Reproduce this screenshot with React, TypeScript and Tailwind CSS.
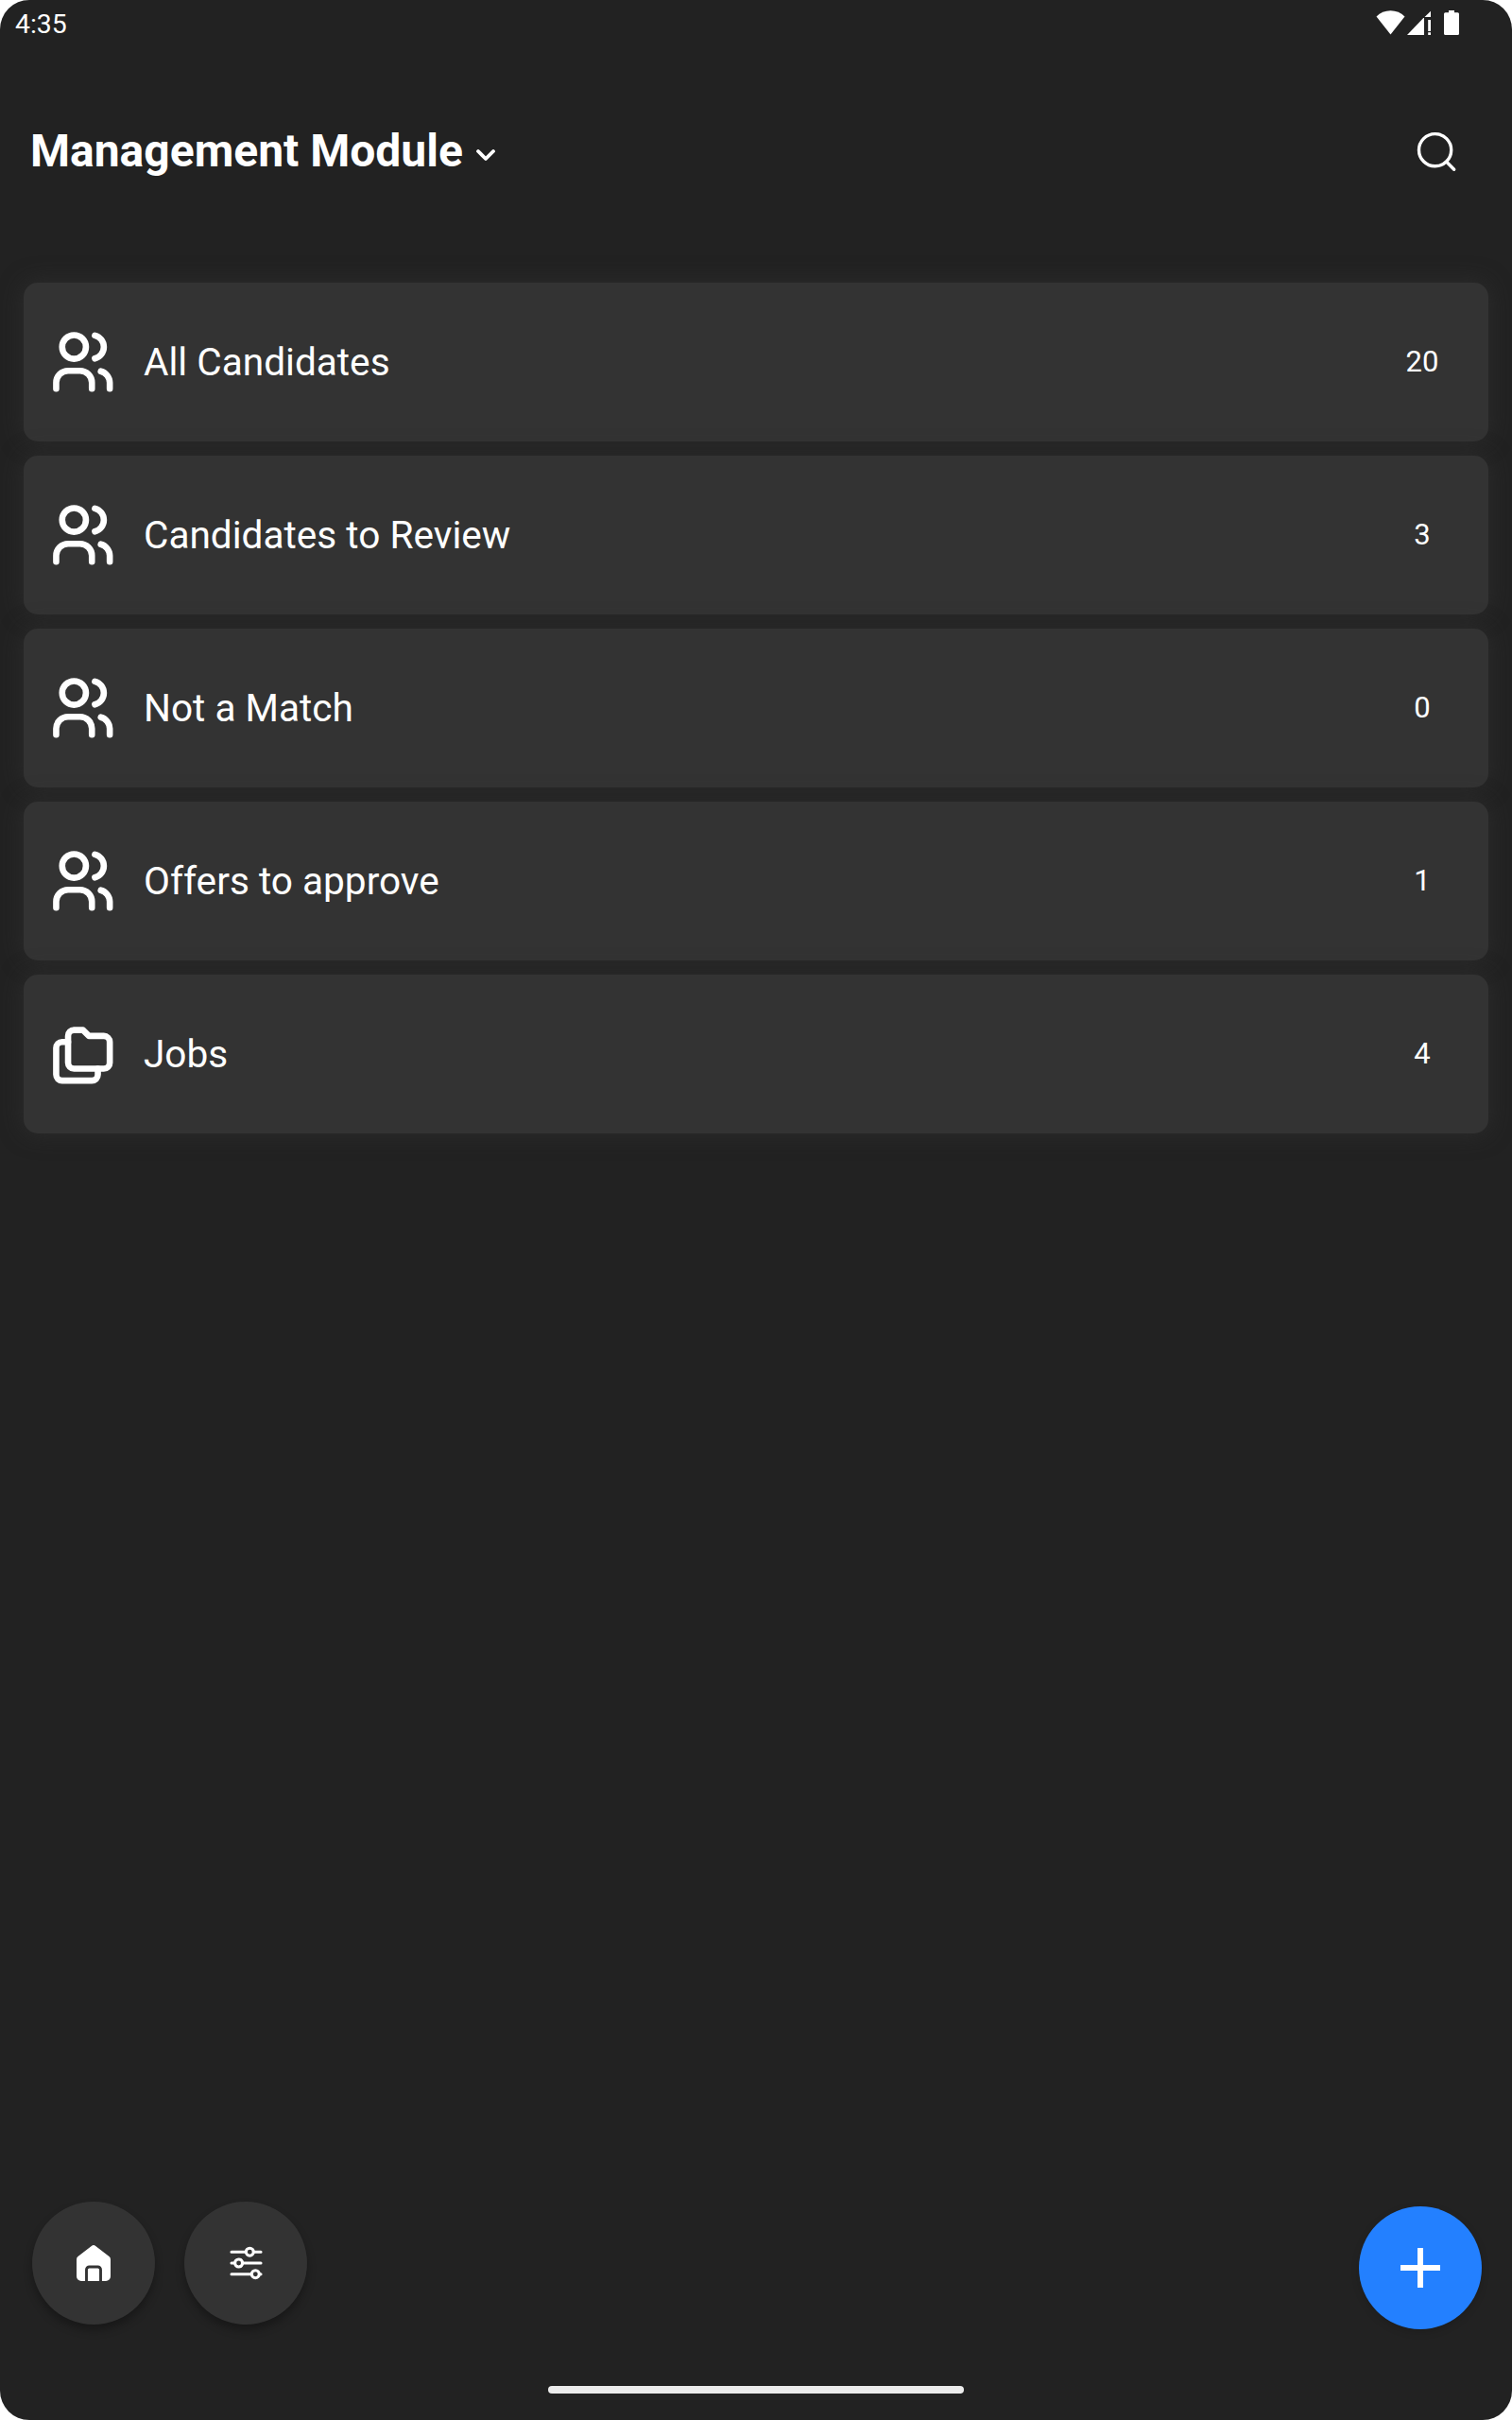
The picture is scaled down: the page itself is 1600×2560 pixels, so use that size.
import React from "react";

const UsersIcon = () => (
  <svg
    className="size-[75.6px] shrink-0"
    viewBox="0 0 24 24"
    fill="none"
    stroke="currentColor"
    strokeWidth="2.1"
    strokeLinecap="round"
    strokeLinejoin="round"
  >
    <circle cx="9" cy="7" r="4" />
    <path d="M3 21v-2a4 4 0 0 1 4-4h4a4 4 0 0 1 4 4v2" />
    <path d="M16 3.13a4 4 0 0 1 0 7.75" />
    <path d="M21 21v-2a4 4 0 0 0-3-3.85" />
  </svg>
);

const FoldersIcon = () => (
  <svg
    className="size-[75.6px] shrink-0"
    viewBox="0 0 24 24"
    fill="none"
    stroke="currentColor"
    strokeWidth="2.1"
    strokeLinecap="round"
    strokeLinejoin="round"
  >
    <path d="M9 4h3l2 2h5a2 2 0 0 1 2 2v7a2 2 0 0 1-2 2H9a2 2 0 0 1-2-2V6a2 2 0 0 1 2-2" />
    <path d="M17 17v2a2 2 0 0 1-2 2H5a2 2 0 0 1-2-2v-9a2 2 0 0 1 2-2h2" />
  </svg>
);

const items = [
  { label: "All Candidates", count: 20, icon: UsersIcon },
  { label: "Candidates to Review", count: 3, icon: UsersIcon },
  { label: "Not a Match", count: 0, icon: UsersIcon },
  { label: "Offers to approve", count: 1, icon: UsersIcon },
  { label: "Jobs", count: 4, icon: FoldersIcon },
];

const StatusBar = () => (
  <div className="flex h-[50px] items-start justify-between pl-4 pr-14">
    <span className="text-[28.4px] leading-[52px]">4:35</span>
    <div className="flex h-[50px] items-start pt-[11px]">
      {/* wifi */}
      <svg className="mr-[2px] h-[26px] w-[31px]" viewBox="0 0 31 26" fill="currentColor">
        <path d="M15.5 25.5 0.5 6.5C4.5 2.4 9.8 0.3 15.5 0.3S26.5 2.4 30.5 6.5Z" />
      </svg>
      {/* mobile signal, no data */}
      <svg className="mr-[14px] h-[26px] w-[25px]" viewBox="0 0 25 26" fill="currentColor">
        <path d="M0 26 17.3 8H18v18Z" />
        <path d="M18.5 7 25 0.8V7Z" />
        <path d="M22.2 10H25v12h-2.8zM22.2 23.3H25V26h-2.8z" />
      </svg>
      {/* battery */}
      <svg className="h-[26px] w-4" viewBox="0 0 16 26" fill="currentColor">
        <path d="M5 0h6v2.3h3.5A1.5 1.5 0 0 1 16 3.8v20.7a1.5 1.5 0 0 1-1.5 1.5h-13A1.5 1.5 0 0 1 0 24.5V3.8a1.5 1.5 0 0 1 1.5-1.5H5z" />
      </svg>
    </div>
  </div>
);

const Header = () => (
  <header className="flex h-[220px] items-center justify-between pl-8 pr-[56px]">
    <button className="flex items-center">
      <h1 className="text-[48px] font-bold leading-[56px]">Management Module</h1>
      <svg
        className="ml-3 mt-2 h-4 w-6"
        viewBox="0 0 24 16"
        fill="none"
        stroke="currentColor"
        strokeWidth="3.8"
        strokeLinecap="round"
        strokeLinejoin="round"
      >
        <path d="M4 4l8 8 8-8" />
      </svg>
    </button>
    <button>
      <svg
        className="size-[48px]"
        viewBox="0 0 48 48"
        fill="none"
        stroke="currentColor"
        strokeWidth="3.4"
        strokeLinecap="round"
      >
        <circle cx="22.6" cy="22.7" r="17.1" />
        <path d="M35 35.5l7.7 7.8" />
      </svg>
    </button>
  </header>
);

export default function App() {
  return (
    <div className="h-[2560px] w-[1600px] bg-white font-['Roboto',sans-serif] text-white">
      <div className="flex h-full flex-col overflow-hidden rounded-[31px] bg-[#222222]">
        <StatusBar />
        <Header />

        <main className="flex grow flex-col gap-[15px] px-[25px] pt-[29px]">
          {items.map(({ label, count, icon: Icon }) => (
            <div
              key={label}
              className="flex h-[168px] items-center rounded-[15px] bg-[#333333] pl-[24.7px] shadow-[0_0_24px_rgba(51,51,51,0.65)]"
            >
              <Icon />
              <span className="ml-[26.7px] grow text-[40.6px] leading-[48px]">{label}</span>
              <span className="w-[140px] text-center text-[31px] leading-[36px]">{count}</span>
            </div>
          ))}
        </main>

        <footer className="flex items-start justify-between pl-[34.4px] pr-8">
          <div className="flex gap-[31px]">
            <button className="flex size-[130px] items-center justify-center rounded-full bg-[#333333] shadow-[0_6px_10px_rgba(0,0,0,0.3)]">
              <svg className="h-[38px] w-9" viewBox="0 0 36 38">
                <path
                  d="M15.8 0.9a3.5 3.5 0 0 1 4.4 0L34.5 12.1a4 4 0 0 1 1.5 3.1V33a5 5 0 0 1-5 5H5a5 5 0 0 1-5-5V15.2a4 4 0 0 1 1.5-3.1Z"
                  fill="white"
                />
                <path
                  d="M10.5 38V26a3 3 0 0 1 3-3h9a3 3 0 0 1 3 3v12"
                  fill="none"
                  stroke="#333333"
                  strokeWidth="2.9"
                />
              </svg>
            </button>
            <button className="flex size-[130px] items-center justify-center rounded-full bg-[#333333] shadow-[0_6px_10px_rgba(0,0,0,0.3)]">
              <svg
                className="h-9 w-[35px]"
                viewBox="0 0 35 36"
                fill="none"
                stroke="currentColor"
                strokeWidth="3.1"
                strokeLinecap="round"
              >
                <path d="M2 6.2h14.5M26 6.2h7M2 18h3M14 18h19M2 29.7h20.5M32 29.7h1" />
                <circle cx="21.3" cy="6.2" r="4" />
                <circle cx="9.6" cy="18" r="4" />
                <circle cx="27.3" cy="29.7" r="4" />
              </svg>
            </button>
          </div>
          <button className="mt-[5px] flex size-[130px] items-center justify-center rounded-full bg-[#2380ff] shadow-[0_3px_8px_rgba(0,0,0,0.15)]">
            <svg className="size-[42px]" viewBox="0 0 42 42" stroke="currentColor" strokeWidth="6">
              <path d="M21 0v42M0 21h42" />
            </svg>
          </button>
        </footer>

        <div className="mx-auto mb-7 mt-[60px] h-2 w-[440px] shrink-0 rounded-full bg-[#ececec]" />
      </div>
    </div>
  );
}
